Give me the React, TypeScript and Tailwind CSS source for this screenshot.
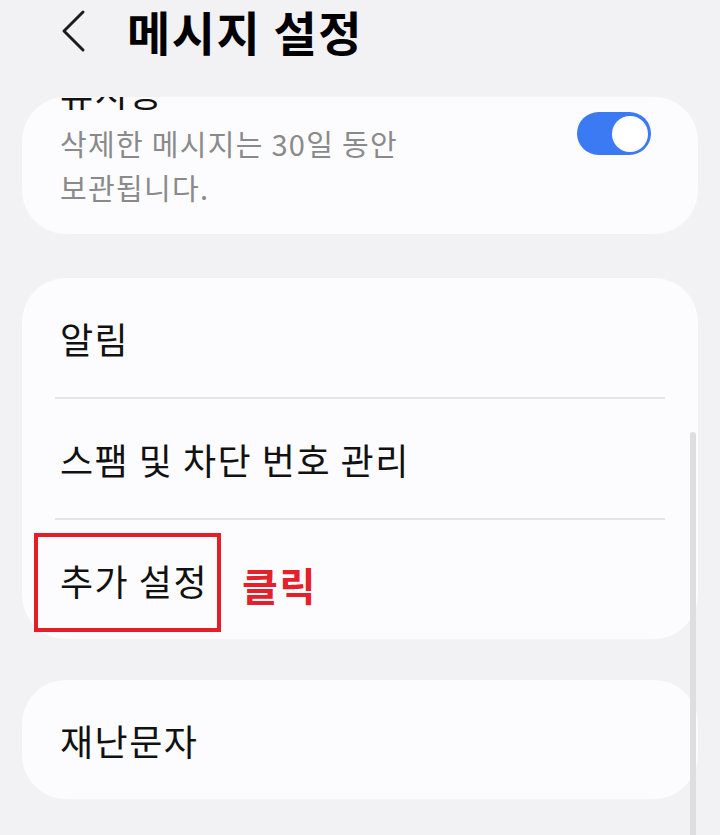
const rows = ["알림", "스팸 및 차단 번호 관리"];

const Chevron = () => (
  <svg width="26" height="44" viewBox="0 0 26 44" fill="none" className="shrink-0">
    <path
      d="M22 3 L3 22 L22 41"
      stroke="#1c1c1c"
      strokeWidth="3"
      strokeLinecap="round"
      strokeLinejoin="round"
    />
  </svg>
);

const Toggle = () => (
  <div className="mt-[15px] flex h-[43px] w-[74px] shrink-0 items-center justify-end rounded-full bg-[#3b7af3] pr-[3px]">
    <div className="h-[36px] w-[36px] rounded-full bg-white" />
  </div>
);

export default function App() {
  return (
    <div className="relative h-[835px] w-[720px] overflow-hidden bg-[#f2f2f4] font-['Noto_Sans_CJK_KR',sans-serif] text-[#111]">
      {/* header */}
      <header className="flex h-[62px] items-center pl-[61px]">
        <Chevron />
        <h1 className="ml-[40px] text-[47px] font-bold leading-[56px] tracking-[1.5px] text-black">
          메시지 설정
        </h1>
      </header>

      <div className="flex flex-col px-[22px] pt-[35px]">
        {/* trash card, scrolled partly under header */}
        <section className="flex h-[137px] overflow-hidden rounded-[44px] bg-[#fcfcfe] pl-[38px] pr-[47px]">
          <div className="flex flex-1 flex-col">
            <div className="h-[13px] overflow-hidden">
              <div className="-mt-[25px] text-[36px] leading-[38px] tracking-[1.5px]">휴지통</div>
            </div>
            <p className="mt-[11px] text-[29px] leading-[44px] tracking-[1.3px] text-[#8a8a8a]">
              삭제한 메시지는 30일 동안
              <br />
              보관됩니다.
            </p>
          </div>
          <Toggle />
        </section>

        {/* settings list */}
        <section className="mt-[44px] flex flex-col rounded-[44px] bg-[#fcfcfe]">
          {rows.map((label) => (
            <div key={label} className="flex flex-col">
              <div className="flex h-[119px] items-center pl-[38px] text-[36px] leading-[44px] tracking-[1.5px]">
                {label}
              </div>
              <div className="mx-[33px] h-[2px] bg-[#e4e4e6]" />
            </div>
          ))}
          <div className="relative flex h-[119px] items-center pl-[38px]">
            <span className="text-[36px] leading-[44px] tracking-[1.5px]">추가 설정</span>
            <span className="ml-[34px] mt-[8px] text-[39px] font-bold leading-[46px] tracking-[1.5px] text-[#e5202a]">
              클릭
            </span>
            <div className="absolute left-[12px] top-[13px] h-[99px] w-[187px] border-4 border-[#e31e26]" />
          </div>
        </section>

        <section className="mt-[41px] flex h-[119px] items-center rounded-[44px] bg-[#fcfcfe] pl-[38px] text-[36px] leading-[44px] tracking-[1.5px]">
          재난문자
        </section>

        <div className="mt-[34px] pl-[38px] text-[30px] leading-none text-[#9a9a9c]">
          메시지 설정
        </div>
      </div>

      {/* scroll indicator */}
      <div className="absolute right-[24px] top-[432px] h-[420px] w-[6px] rounded-full bg-[#dedee0]" />
    </div>
  );
}
